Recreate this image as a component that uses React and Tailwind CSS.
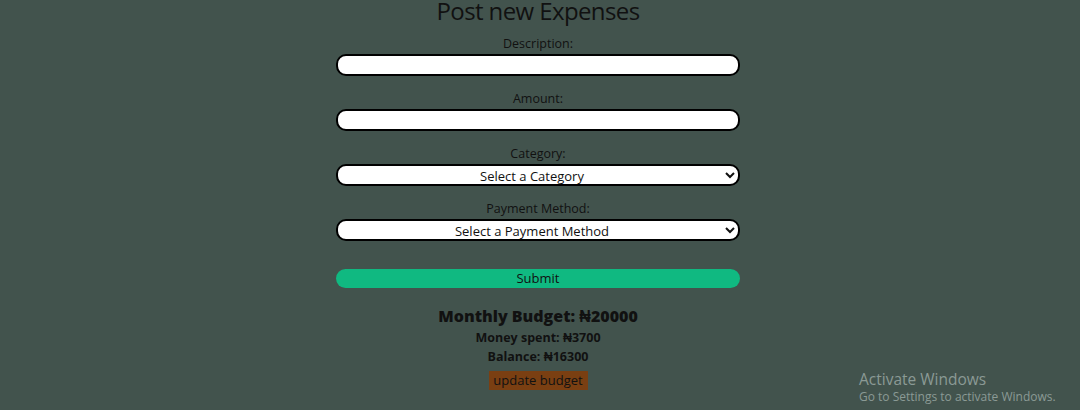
import React, { useState } from 'react'

export default function App(){
  const [description, setDescription] = useState('')
  const [amount, setAmount] = useState('')
  const [category, setCategory] = useState('')
  const [method, setMethod] = useState('')

  const budget = 20000
  const spent = 3700

  return (
    <div className="relative min-h-[410px] w-full overflow-hidden bg-[#42534d] text-[#111] font-['Open_Sans',sans-serif]">
      <div className="mx-auto flex w-[404px] flex-col items-center -translate-x-[2px]">
        <h1 className="-mt-[5px] text-[24px] leading-[32px] tracking-[-0.6px]">Post new Expenses</h1>

        <form className="mt-[8px] w-full" onSubmit={e=>e.preventDefault()}>
          <label className="block text-center text-[12.5px] leading-[18px]">Description:</label>
          <input value={description} onChange={e=>setDescription(e.target.value)} className="mt-[1px] block h-[22px] w-full rounded-[10px] border-2 border-black bg-white px-2 text-[13px]" />

          <label className="mt-[14px] block text-center text-[12.5px] leading-[18px]">Amount:</label>
          <input value={amount} onChange={e=>setAmount(e.target.value)} className="mt-[1px] block h-[22px] w-full rounded-[10px] border-2 border-black bg-white px-2 text-[13px]" />

          <label className="mt-[14px] block text-center text-[12.5px] leading-[18px]">Category:</label>
          <select value={category} onChange={e=>setCategory(e.target.value)} className="mt-[1px] block h-[22px] w-full rounded-[10px] border-2 border-black bg-white text-[13px] leading-[18px] [text-align-last:center]">
            <option value="">Select a Category</option>
            <option>Food</option>
            <option>Transport</option>
            <option>Bills</option>
          </select>

          <label className="mt-[14px] block text-center text-[12.5px] leading-[18px]">Payment Method:</label>
          <select value={method} onChange={e=>setMethod(e.target.value)} className="mt-[1px] block h-[22px] w-full rounded-[10px] border-2 border-black bg-white text-[13px] leading-[18px] [text-align-last:center]">
            <option value="">Select a Payment Method</option>
            <option>Cash</option>
            <option>Card</option>
            <option>Transfer</option>
          </select>

          <button type="submit" className="mt-[28px] block h-[19px] w-full rounded-full bg-[#10b981] text-[13px] leading-[19px]">Submit</button>
        </form>

        <div className="mt-[17px] flex flex-col items-center font-bold">
          <h2 className="text-[16px] font-extrabold leading-[22px]">Monthly Budget: ₦{budget}</h2>
          <p className="mt-[1px] text-[12.5px] leading-[19px]">Money spent: ₦{spent}</p>
          <p className="text-[12.5px] leading-[19px]">Balance: ₦{budget - spent}</p>
          <button className="mt-[5px] h-[19px] w-[99px] bg-[#7a3f12] text-[13px] font-normal leading-[19px]">update budget</button>
        </div>
      </div>

      <div className="absolute left-[859px] top-[369px] text-[#8b9a95]">
        <div className="text-[15.5px] leading-[20px]">Activate Windows</div>
        <div className="text-[12px] leading-[16px]">Go to Settings to activate Windows.</div>
      </div>
    </div>
  )
}
